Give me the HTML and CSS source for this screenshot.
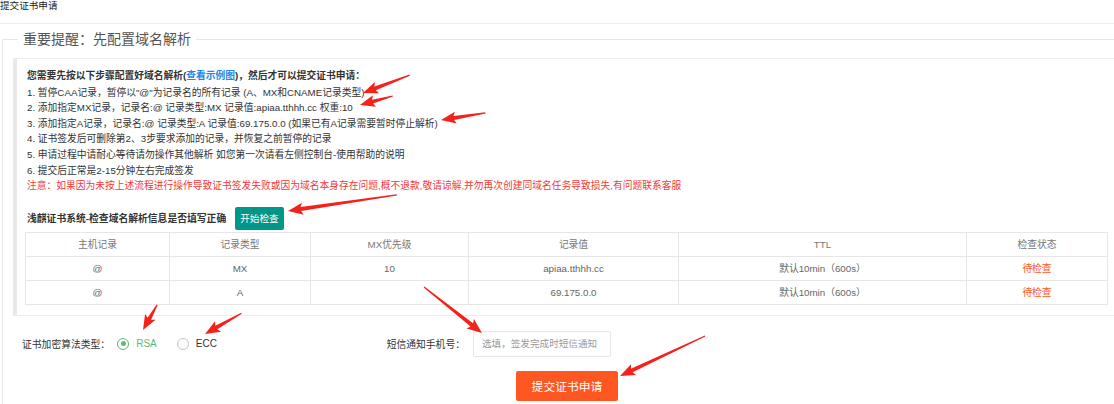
FILE: index.html
```html
<!DOCTYPE html>
<html lang="zh-CN">
<head>
    <meta charset="UTF-8">
    <title>提交证书申请</title>
    <link rel="stylesheet" href="styles.css">
</head>
<body>
    <div class="page">
        <div class="page-header">提交证书申请</div>

        <fieldset class="box">
            <legend>重要提醒：先配置域名解析</legend>

            <div class="quote">
                <p class="lead">您需要先按以下步骤配置好域名解析(<a href="#">查看示例图</a>)，然后才可以提交证书申请：</p>
                <p>1. 暂停CAA记录，暂停以"@"为记录名的所有记录 (A、MX和CNAME记录类型)</p>
                <p>2. 添加指定MX记录，记录名:@ 记录类型:MX 记录值:apiaa.tthhh.cc 权重:10</p>
                <p>3. 添加指定A记录，记录名:@ 记录类型:A 记录值:69.175.0.0 (如果已有A记录需要暂时停止解析)</p>
                <p>4. 证书签发后可删除第2、3步要求添加的记录，并恢复之前暂停的记录</p>
                <p>5. 申请过程中请耐心等待请勿操作其他解析 如您第一次请看左侧控制台-使用帮助的说明</p>
                <p>6. 提交后正常是2-15分钟左右完成签发</p>
                <p class="warn">注意：如果因为未按上述流程进行操作导致证书签发失败或因为域名本身存在问题,概不退款,敬请谅解,并勿再次创建同域名任务导致损失,有问题联系客服</p>

                <div class="check-row">
                    <span class="check-title">浅麒证书系统-检查域名解析信息是否填写正确</span>
                    <button class="btn-check">开始检查</button>
                </div>

                <table class="dns-table">
                    <colgroup>
                        <col style="width:144px">
                        <col style="width:141px">
                        <col style="width:158px">
                        <col style="width:210px">
                        <col style="width:288px">
                        <col style="width:141px">
                    </colgroup>
                    <thead>
                        <tr>
                            <th>主机记录</th>
                            <th>记录类型</th>
                            <th>MX优先级</th>
                            <th>记录值</th>
                            <th>TTL</th>
                            <th>检查状态</th>
                        </tr>
                    </thead>
                    <tbody>
                        <tr>
                            <td>@</td>
                            <td>MX</td>
                            <td>10</td>
                            <td>apiaa.tthhh.cc</td>
                            <td>默认10min（600s）</td>
                            <td class="pending">待检查</td>
                        </tr>
                        <tr>
                            <td>@</td>
                            <td>A</td>
                            <td></td>
                            <td>69.175.0.0</td>
                            <td>默认10min（600s）</td>
                            <td class="pending">待检查</td>
                        </tr>
                    </tbody>
                </table>
            </div>

            <div class="form-row">
                <div class="algo">
                    <span class="form-label">证书加密算法类型：</span>
                    <label class="radio checked"><i></i>RSA</label>
                    <label class="radio"><i></i>ECC</label>
                </div>
                <span class="form-label phone-label">短信通知手机号：</span>
                <input type="text" class="phone-input" placeholder="选填，签发完成时短信通知">
            </div>

            <div class="submit-row">
                <button class="btn-submit">提交证书申请</button>
            </div>
        </fieldset>

        <!-- 标注箭头：以箭头尖为原点，沿 x 轴指向 -->
        <svg class="marks" width="1132" height="404" viewBox="0 0 1132 404">
            <g fill="#f5221b">
                <path transform="translate(363 93) rotate(159)" d="M-50,-0.6 L-13,-2 L-15,-6 L0,0 L-15,6 L-13,2 L-50,0.6 Z"/>
                <path transform="translate(360 105) rotate(164.7)" d="M-34,-0.6 L-13,-2 L-15,-6 L0,0 L-15,6 L-13,2 L-34,0.6 Z"/>
                <path transform="translate(441 120) rotate(171)" d="M-45,-0.6 L-13,-2 L-15,-6 L0,0 L-15,6 L-13,2 L-45,0.6 Z"/>
                <path transform="translate(288 211) rotate(171.6)" d="M-110,-0.6 L-13,-2 L-15,-6 L0,0 L-15,6 L-13,2 L-110,0.6 Z"/>
                <path transform="translate(143 330) rotate(119.2)" d="M-29,-0.6 L-13,-2 L-15,-6 L0,0 L-15,6 L-13,2 L-29,0.6 Z"/>
                <path transform="translate(205 334) rotate(150.4)" d="M-42,-0.6 L-13,-2 L-15,-6 L0,0 L-15,6 L-13,2 L-42,0.6 Z"/>
                <path transform="translate(482 333) rotate(38.4)" d="M-74,-0.6 L-13,-2 L-15,-6 L0,0 L-15,6 L-13,2 L-74,0.6 Z"/>
                <path transform="translate(620 376) rotate(154.8)" d="M-94,-0.6 L-13,-2 L-15,-6 L0,0 L-15,6 L-13,2 L-94,0.6 Z"/>
            </g>
        </svg>
    </div>
</body>
</html>
```

FILE: styles.css
```css
html, body {
    margin: 0;
    overflow: hidden;
}

body {
    font-family: "Liberation Sans", "Noto Sans CJK SC", sans-serif;
    font-size: 10px;
    color: #333;
    background-color: #fff;
}

.page {
    position: relative;
    width: 1132px;
}

.page-header {
    height: 23px;
    line-height: 11px;
    border-bottom: 1px solid #eee;
    font-size: 9.6px;
    color: #222;
}

.box {
    margin: 5px 0 0 2px;
    padding: 0 10px 20px 10px;
    border: 1px solid #e6e6e6;
    min-width: 0;
}

.box legend {
    margin-left: 5px;
    padding: 0 5px;
    font-size: 14px;
    line-height: 20px;
    color: #555;
}

.quote {
    margin-top: 9px;
    padding: 9px 13px 10px 8px;
    border: 1px solid #eee;
    border-left: 4px solid #e8e8e8;
}

.quote p {
    margin: 0;
    padding-left: 2px;
    line-height: 15.6px;
    font-size: 9.75px;
}

.quote .lead {
    font-weight: bold;
    margin-bottom: 1px;
}

.quote a {
    color: #1e88e5;
    text-decoration: none;
}

.quote .warn {
    color: #f03a3a;
}

.check-row {
    display: flex;
    align-items: center;
    margin-top: 13px;
    padding-left: 2px;
}

.check-title {
    font-weight: bold;
    font-size: 9.8px;
}

.btn-check {
    margin-left: 9px;
    height: 23px;
    padding: 0 5px;
    border: none;
    border-radius: 2px;
    background-color: #009688;
    color: #fff;
    font-family: inherit;
    font-size: 9.6px;
}

.dns-table {
    margin-top: 2px;
    border-collapse: collapse;
    table-layout: fixed;
    width: 1082px;
}

.dns-table th,
.dns-table td {
    height: 23px;
    padding: 0;
    border: 1px solid #e6e6e6;
    text-align: center;
    font-weight: normal;
    font-size: 9.75px;
    color: #666;
}

.dns-table th {
    color: #777;
}

.dns-table .pending {
    color: #ff5722;
}

.form-row {
    display: flex;
    align-items: center;
    margin-top: 15px;
}

.algo {
    display: flex;
    align-items: center;
    width: 345px;
    padding-left: 9px;
    box-sizing: border-box;
}

.form-label {
    font-size: 9.8px;
    color: #333;
}

.radio {
    display: flex;
    align-items: center;
    margin-left: 7px;
    margin-right: 13px;
    font-size: 10px;
    color: #333;
}

.radio i {
    width: 12px;
    height: 12px;
    margin-right: 7px;
    border: 1px solid #c2c2c2;
    border-radius: 50%;
    box-sizing: border-box;
    position: relative;
}

.radio.checked {
    color: #5fb878;
}

.radio.checked i {
    border-color: #5fb878;
}

.radio.checked i::after {
    content: "";
    position: absolute;
    left: 2.5px;
    top: 2.5px;
    width: 5px;
    height: 5px;
    border-radius: 50%;
    background-color: #5fb878;
}

.phone-label {
    width: 107px;
    text-align: right;
}

.phone-input {
    margin-left: 8px;
    width: 138px;
    height: 26px;
    padding: 0 8px;
    border: 1px solid #e6e6e6;
    border-radius: 2px;
    box-sizing: border-box;
    font-family: inherit;
    font-size: 9.6px;
    outline: none;
}

.phone-input::placeholder {
    color: #999;
}

.submit-row {
    margin-top: 14px;
    text-align: center;
}

.btn-submit {
    width: 102px;
    height: 30px;
    border: none;
    border-radius: 2px;
    background-color: #ff5722;
    color: #fff;
    font-family: inherit;
    font-size: 11.8px;
}

.marks {
    position: absolute;
    left: 0;
    top: 0;
    pointer-events: none;
}
```
